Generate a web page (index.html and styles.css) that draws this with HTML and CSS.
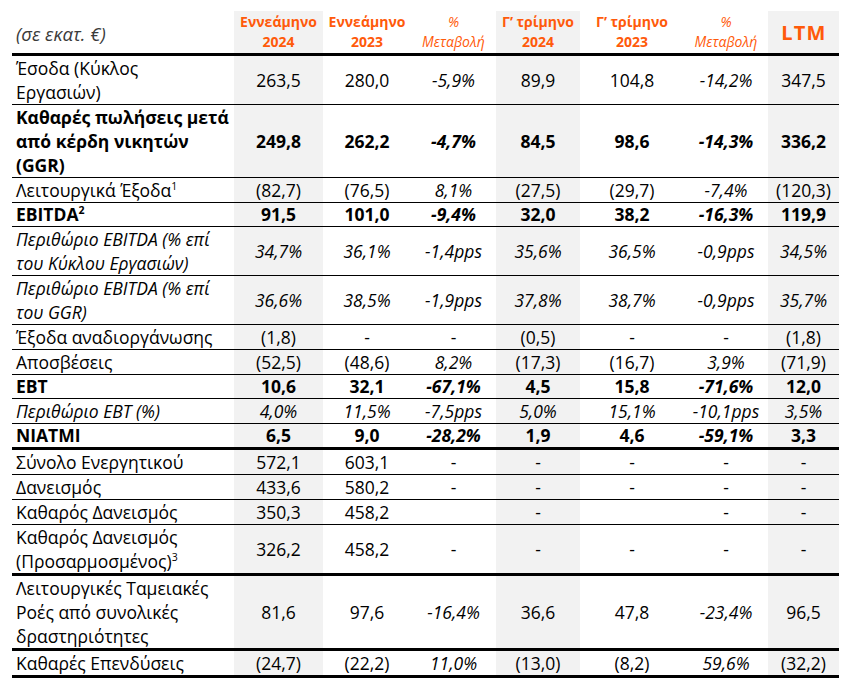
FILE: index.html
```html
<!DOCTYPE html>
<html lang="el">
<head>
<meta charset="utf-8">
<title>Οικονομικά Αποτελέσματα</title>
<link rel="stylesheet" href="styles.css">
</head>
<body>
<table class="fin">
  <colgroup>
    <col class="c-label">
    <col class="c-a">
    <col class="c-b">
    <col class="c-c">
    <col class="c-d">
    <col class="c-e">
    <col class="c-f">
    <col class="c-g">
  </colgroup>
  <thead>
    <tr class="head">
      <th class="unit">(σε εκατ. €)</th>
      <th class="sh hd">Εννεάμηνο<br>2024</th>
      <th class="hd">Εννεάμηνο<br>2023</th>
      <th class="hp">%<br>Μεταβολή</th>
      <th class="sh hd">Γ’ τρίμηνο<br>2024</th>
      <th class="hd">Γ’ τρίμηνο<br>2023</th>
      <th class="hp">%<br>Μεταβολή</th>
      <th class="sh ltm">LTM</th>
    </tr>
  </thead>
  <tbody>
    <tr class="h2">
      <td class="lbl">Έσοδα (Κύκλος<br>Εργασιών)</td>
      <td class="sh">263,5</td><td>280,0</td><td class="it">-5,9%</td>
      <td class="sh">89,9</td><td>104,8</td><td class="it">-14,2%</td><td class="sh">347,5</td>
    </tr>
    <tr class="b h3">
      <td class="lbl">Καθαρές πωλήσεις μετά<br>από κέρδη νικητών<br>(GGR)</td>
      <td class="sh">249,8</td><td>262,2</td><td class="it">-4,7%</td>
      <td class="sh">84,5</td><td>98,6</td><td class="it">-14,3%</td><td class="sh">336,2</td>
    </tr>
    <tr>
      <td class="lbl">Λειτουργικά Έξοδα<sup>1</sup></td>
      <td class="sh">(82,7)</td><td>(76,5)</td><td class="it">8,1%</td>
      <td class="sh">(27,5)</td><td>(29,7)</td><td class="it">-7,4%</td><td class="sh">(120,3)</td>
    </tr>
    <tr class="b h1b">
      <td class="lbl">EBITDA<sup>2</sup></td>
      <td class="sh">91,5</td><td>101,0</td><td class="it">-9,4%</td>
      <td class="sh">32,0</td><td>38,2</td><td class="it">-16,3%</td><td class="sh">119,9</td>
    </tr>
    <tr class="i h2">
      <td class="lbl">Περιθώριο EBITDA (% επί<br>του Κύκλου Εργασιών)</td>
      <td class="sh">34,7%</td><td>36,1%</td><td>-1,4pps</td>
      <td class="sh">35,6%</td><td>36,5%</td><td>-0,9pps</td><td class="sh">34,5%</td>
    </tr>
    <tr class="i h2">
      <td class="lbl">Περιθώριο EBITDA (% επί<br>του GGR)</td>
      <td class="sh">36,6%</td><td>38,5%</td><td>-1,9pps</td>
      <td class="sh">37,8%</td><td>38,7%</td><td>-0,9pps</td><td class="sh">35,7%</td>
    </tr>
    <tr>
      <td class="lbl">Έξοδα αναδιοργάνωσης</td>
      <td class="sh">(1,8)</td><td>-</td><td>-</td>
      <td class="sh">(0,5)</td><td>-</td><td>-</td><td class="sh">(1,8)</td>
    </tr>
    <tr>
      <td class="lbl">Αποσβέσεις</td>
      <td class="sh">(52,5)</td><td>(48,6)</td><td class="it">8,2%</td>
      <td class="sh">(17,3)</td><td>(16,7)</td><td class="it">3,9%</td><td class="sh">(71,9)</td>
    </tr>
    <tr class="b h1b">
      <td class="lbl">EBT</td>
      <td class="sh">10,6</td><td>32,1</td><td class="it">-67,1%</td>
      <td class="sh">4,5</td><td>15,8</td><td class="it">-71,6%</td><td class="sh">12,0</td>
    </tr>
    <tr class="i">
      <td class="lbl">Περιθώριο EBT (%)</td>
      <td class="sh">4,0%</td><td>11,5%</td><td>-7,5pps</td>
      <td class="sh">5,0%</td><td>15,1%</td><td>-10,1pps</td><td class="sh">3,5%</td>
    </tr>
    <tr class="b h1b thick">
      <td class="lbl">NIATMI</td>
      <td class="sh">6,5</td><td>9,0</td><td class="it">-28,2%</td>
      <td class="sh">1,9</td><td>4,6</td><td class="it">-59,1%</td><td class="sh">3,3</td>
    </tr>
    <tr>
      <td class="lbl">Σύνολο Ενεργητικού</td>
      <td class="sh">572,1</td><td>603,1</td><td>-</td>
      <td class="sh">-</td><td>-</td><td>-</td><td class="sh">-</td>
    </tr>
    <tr>
      <td class="lbl">Δανεισμός</td>
      <td class="sh">433,6</td><td>580,2</td><td>-</td>
      <td class="sh">-</td><td>-</td><td>-</td><td class="sh">-</td>
    </tr>
    <tr>
      <td class="lbl">Καθαρός Δανεισμός</td>
      <td class="sh">350,3</td><td>458,2</td><td></td>
      <td class="sh">-</td><td></td><td>-</td><td class="sh">-</td>
    </tr>
    <tr class="h2 thick">
      <td class="lbl">Καθαρός Δανεισμός<br>(Προσαρμοσμένος)<sup>3</sup></td>
      <td class="sh">326,2</td><td>458,2</td><td>-</td>
      <td class="sh">-</td><td>-</td><td>-</td><td class="sh">-</td>
    </tr>
    <tr class="h3 thick">
      <td class="lbl">Λειτουργικές Ταμειακές<br>Ροές από συνολικές<br>δραστηριότητες</td>
      <td class="sh">81,6</td><td>97,6</td><td class="it">-16,4%</td>
      <td class="sh">36,6</td><td>47,8</td><td class="it">-23,4%</td><td class="sh">96,5</td>
    </tr>
    <tr class="thick">
      <td class="lbl">Καθαρές Επενδύσεις</td>
      <td class="sh">(24,7)</td><td>(22,2)</td><td class="it">11,0%</td>
      <td class="sh">(13,0)</td><td>(8,2)</td><td class="it">59,6%</td><td class="sh">(32,2)</td>
    </tr>
  </tbody>
</table>
</body>
</html>
```

FILE: styles.css
```css
html, body {
  margin: 0;
  padding: 0;
  background: #ffffff;
}

body {
  font-family: "Open Sans", "Noto Sans", "DejaVu Sans", sans-serif;
  color: #000000;
}

.fin {
  margin: 11px 0 0 12px;
  width: 827px;
  border-collapse: collapse;
  table-layout: fixed;
}

.c-label { width: 222px; }
.c-a { width: 89px; }
.c-b { width: 88px; }
.c-c { width: 85px; }
.c-d { width: 84px; }
.c-e { width: 104px; }
.c-f { width: 84px; }
.c-g { width: 71px; }

.fin th,
.fin td {
  padding: 0;
  text-align: center;
  vertical-align: middle;
  white-space: nowrap;
}

.fin td {
  font-size: 17.5px;
  line-height: 24px;
  height: 24px;
  border-bottom: 1px solid #000000;
}

.head th {
  height: 40px;
  border-bottom: 3px solid #000000;
  color: #ff5a0a;
}

.head .unit {
  text-align: left;
  padding: 2px 0 0 4px;
  font-weight: normal;
  font-style: italic;
  font-size: 18.5px;
  color: #3a3a3a;
}

.head .hd {
  font-size: 14px;
  line-height: 20px;
  font-weight: bold;
}

.head .hp {
  font-size: 14px;
  line-height: 20px;
  font-weight: normal;
  font-style: italic;
}

.head .ltm {
  font-size: 20px;
  font-weight: bold;
  letter-spacing: 1.2px;
  padding-left: 1px;
}

.sh {
  background: #f2f2f2;
}

.fin td.lbl {
  text-align: left;
  padding-left: 4px;
}

.it {
  font-style: italic;
}

.b td {
  font-weight: bold;
}

.i td {
  font-style: italic;
}

.h1b td {
  height: 23px;
  line-height: 23px;
}

.h2 td {
  height: 48px;
}

.h3 td {
  height: 72px;
}

.thick td {
  border-bottom: 3px solid #000000;
}

sup {
  font-size: 10.5px;
  line-height: 0;
  vertical-align: 7px;
}
```
